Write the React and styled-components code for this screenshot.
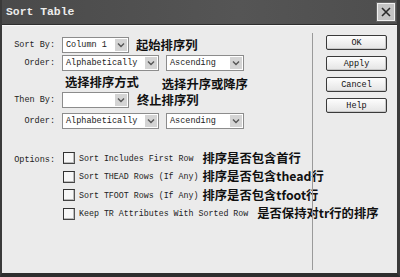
import React from "react";
import styled, { createGlobalStyle } from "styled-components";

const GlobalStyle = createGlobalStyle`
    html, body {
        margin: 0;
        padding: 0;
        background: #ebebeb;
    }
`;

const mono = `"Liberation Mono", "DejaVu Sans Mono", monospace`;
const cjk = `"Noto Sans CJK SC", "Noto Sans", sans-serif`;

const Window = styled.div`
    width: 400px;
    height: 277px;
    box-sizing: border-box;
    display: flex;
    flex-direction: column;
    background: #ebebeb;
    border-left: 2px solid #3a3a3a;
    border-right: 3px solid #3a3a3a;
    border-bottom: 4px solid #2e2e2e;
    overflow: hidden;
`;

const TitleBar = styled.div`
    height: 25px;
    flex: none;
    display: flex;
    align-items: center;
    justify-content: space-between;
    padding: 0 2px 0 4px;
    background: linear-gradient(90deg, #4a4a4a 0%, #555 60%, #4e4e4e 100%);
    border-bottom: 1px solid #2e2e2e;
    box-sizing: border-box;
`;

const Title = styled.span`
    font-family: ${mono};
    font-weight: bold;
    font-size: 11.4px;
    color: #ececec;
`;

const CloseButton = styled.div`
    width: 18px;
    height: 18px;
    box-sizing: border-box;
    border: 1px solid #f0f0f0;
    outline: 1px solid #666;
    background: #c4c4c4;
    display: flex;
    align-items: center;
    justify-content: center;
`;

const Body = styled.div`
    flex: 1;
    display: flex;
    border-top: 1px solid #fafafa;
`;

const Main = styled.div`
    width: 310px;
    flex: none;
    padding-top: 11px;
    display: flex;
    flex-direction: column;
`;

const Row = styled.div`
    display: grid;
    grid-template-columns: 53px auto;
    column-gap: 7px;
    align-items: ${p => (p.$top_align ? "start" : "center")};
    margin-top: ${p => p.$top || 0}px;
    height: ${p => p.$h || 16}px;
`;

const Label = styled.span`
    font-family: ${mono};
    font-size: 8.5px;
    color: #222;
    text-align: right;
    align-self: ${p => (p.$start ? "start" : "center")};
    padding-top: ${p => (p.$start ? 3 : 0)}px;
`;

const Controls = styled.div`
    display: flex;
    align-items: center;
    gap: ${p => p.$gap || 7}px;
`;

const Select = styled.div`
    width: ${p => p.$w}px;
    height: 16px;
    box-sizing: border-box;
    border: 1px solid #8c8c8c;
    background: #fff;
    display: flex;
    align-items: center;
    justify-content: space-between;
    padding-left: 3px;
    font-family: ${mono};
    font-size: 8.5px;
    color: #222;
`;

const Arrow = styled.div`
    width: 12px;
    height: 12px;
    margin-right: 1px;
    background: #d4d4d4;
    display: flex;
    align-items: center;
    justify-content: center;
`;

const Note = styled.span`
    font-family: ${cjk};
    font-weight: bold;
    font-size: 12.3px;
    color: #111;
    line-height: 1;
    white-space: nowrap;
    padding-top: ${p => p.$down || 0}px;
`;

const Annotations = styled.div`
    display: flex;
    align-items: flex-start;
    gap: 23px;
    padding-left: 3px;
    padding-top: 3px;
`;

const Options = styled.div`
    display: flex;
    flex-direction: column;
    gap: 6.5px;
`;

const OptionRow = styled.div`
    display: flex;
    align-items: center;
    gap: 4px;
    height: 12px;
    margin-left: 1px;
`;

const Box = styled.div`
    width: 12px;
    height: 12px;
    box-sizing: border-box;
    flex: none;
    border: 1px solid #333;
    border-right-color: #555;
    border-bottom-color: #444;
    background: #f7f7f7;
    box-shadow: inset -1px -1px 0 #bbb;
`;

const OptionText = styled.span`
    font-family: ${mono};
    font-size: 8.3px;
    color: #222;
    white-space: pre;
`;

const Separator = styled.div`
    width: 1px;
    flex: none;
    background: #9a9a9a;
    margin: 7px 0 3px;
`;

const Buttons = styled.div`
    flex: 1;
    display: flex;
    flex-direction: column;
    gap: 6px;
    padding: 9px 0 0 13px;
`;

const Button = styled.div`
    width: 61px;
    height: 15px;
    box-sizing: border-box;
    border: 1px solid #3a3a3a;
    border-radius: 2px;
    background: linear-gradient(#fdfdfd, #e4e4e4);
    box-shadow: inset -1px -1px 0 #c8c8c8;
    display: flex;
    align-items: center;
    justify-content: center;
    font-family: ${mono};
    font-size: 8.5px;
    color: #111;
`;

const Chevron = () => (
    <svg width="8" height="6" viewBox="0 0 8 6">
        <path d="M1 1.5 L4 4.5 L7 1.5" fill="none" stroke="#555" strokeWidth="1.4" />
    </svg>
);

const Dropdown = ({ width, value }) => (
    <Select $w={width}>
        <span>{value}</span>
        <Arrow>
            <Chevron />
        </Arrow>
    </Select>
);

const options = [
    ["Sort Includes First Row ", "排序是否包含首行"],
    ["Sort THEAD Rows (If Any)", "排序是否包含thead行"],
    ["Sort TFOOT Rows (If Any)", "排序是否包含tfoot行"],
    ["Keep TR Attributes With Sorted Row ", "是否保持对tr行的排序"]
];

const App = () => {
    return (
        <>
            <GlobalStyle />
            <Window>
                <TitleBar>
                    <Title>Sort Table</Title>
                    <CloseButton>
                        <svg width="12" height="12" viewBox="0 0 12 12">
                            <path d="M2 2 L10 10 M10 2 L2 10" stroke="#2a2a2a" strokeWidth="1.6" />
                        </svg>
                    </CloseButton>
                </TitleBar>
                <Body>
                    <Main>
                        <Row>
                            <Label>Sort By:</Label>
                            <Controls>
                                <Dropdown width={67} value="Column 1" />
                                <Note>起始排序列</Note>
                            </Controls>
                        </Row>
                        <Row $top={2}>
                            <Label>Order:</Label>
                            <Controls>
                                <Dropdown width={97} value="Alphabetically" />
                                <Dropdown width={78} value="Ascending" />
                            </Controls>
                        </Row>
                        <Row $h={21}>
                            <span />
                            <Annotations>
                                <Note>选择排序方式</Note>
                                <Note $down={2}>选择升序或降序</Note>
                            </Annotations>
                        </Row>
                        <Row>
                            <Label>Then By:</Label>
                            <Controls $gap={8}>
                                <Dropdown width={67} value="" />
                                <Note>终止排序列</Note>
                            </Controls>
                        </Row>
                        <Row $top={5}>
                            <Label>Order:</Label>
                            <Controls>
                                <Dropdown width={97} value="Alphabetically" />
                                <Dropdown width={78} value="Ascending" />
                            </Controls>
                        </Row>
                        <Row $top={23} $h={80} $top_align>
                            <Label $start>Options:</Label>
                            <Options>
                                {options.map(([text, note]) => (
                                    <OptionRow key={text}>
                                        <Box />
                                        <OptionText>{text}</OptionText>
                                        <Note>{note}</Note>
                                    </OptionRow>
                                ))}
                            </Options>
                        </Row>
                    </Main>
                    <Separator />
                    <Buttons>
                        <Button>OK</Button>
                        <Button>Apply</Button>
                        <Button>Cancel</Button>
                        <Button>Help</Button>
                    </Buttons>
                </Body>
            </Window>
        </>
    );
};

export default App;
